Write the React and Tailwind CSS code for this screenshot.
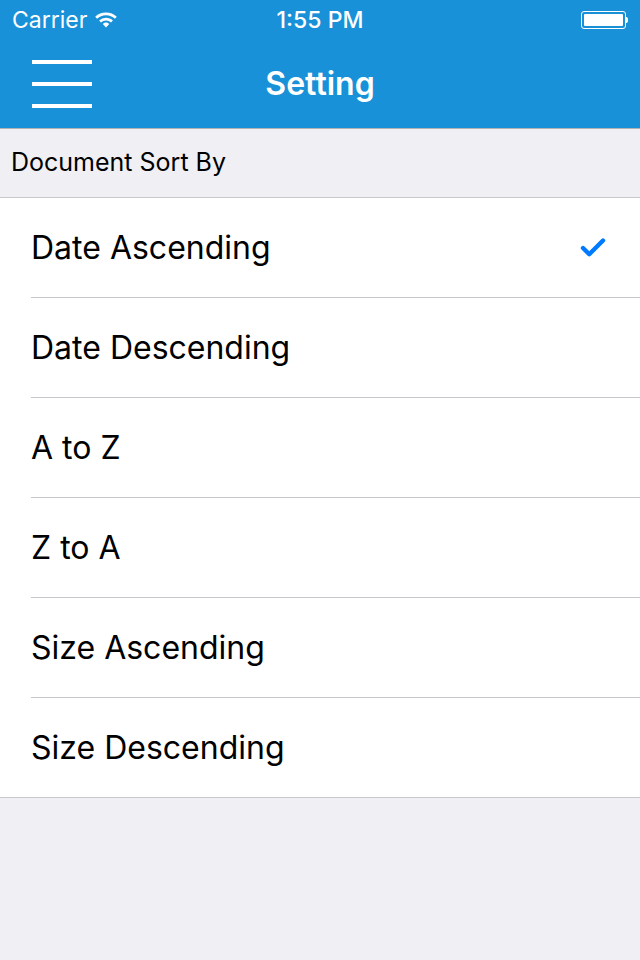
import { Check } from 'lucide-react';

const options = ['Date Ascending', 'Date Descending', 'A to Z', 'Z to A', 'Size Ascending', 'Size Descending'];

function Wifi() {
  return (
    <svg width="22" height="16" viewBox="0 0 22 16" fill="white">
      <path d="M11 15.5l3.2-3.6a4.6 4.6 0 0 0-6.4 0z" />
      <path d="M11 5.8c2.7 0 5.1 1 6.9 2.7l-1.9 2.1A7.3 7.3 0 0 0 11 8.6a7.3 7.3 0 0 0-5 2L4.1 8.5A10 10 0 0 1 11 5.8z" />
      <path d="M11 0.5c4.2 0 8 1.6 10.8 4.2l-1.9 2.1A12.8 12.8 0 0 0 11 3.3 12.8 12.8 0 0 0 2.1 6.8L0.2 4.7A15.6 15.6 0 0 1 11 0.5z" />
    </svg>
  );
}

export default function App() {
  const selected = 'Date Ascending';

  return (
    <div className="min-h-[960px] bg-[#efeff4]" style={{ fontFamily: 'Inter, "Liberation Sans", sans-serif' }}>
      <div className="bg-[#1891d8] text-white border-b border-[#b2b2b2]">
        <div className="h-10 flex items-center justify-between px-3 relative">
          <div className="flex items-center gap-2 text-[23px]">
            <span>Carrier</span>
            <Wifi />
          </div>
          <span className="absolute left-1/2 -translate-x-1/2 text-[23px] font-medium">1:55 PM</span>
          <div className="flex items-center">
            <div className="w-[45px] h-[18px] border border-white rounded-[3px] p-[2px]">
              <div className="w-full h-full bg-white rounded-[1px]" />
            </div>
            <div className="w-[2px] h-[6px] bg-white rounded-r-sm" />
          </div>
        </div>
        <div className="h-[88px] flex items-center relative">
          <div className="ml-8 flex flex-col gap-[18px] w-[60px]">
            <div className="h-[4px] bg-white" />
            <div className="h-[4px] bg-white" />
            <div className="h-[4px] bg-white" />
          </div>
          <span className="absolute left-1/2 -translate-x-1/2 text-[32px] font-semibold">Setting</span>
        </div>
      </div>

      <div className="h-[69px] flex items-center px-[11px] text-[25px] text-black border-b border-[#c8c7cc]">
        Document Sort By
      </div>

      <div className="bg-white border-b border-[#c8c7cc]">
        {options.map((o, i) => {
          const last = i === options.length - 1;
          return (
            <div key={o} className="pl-[31px]">
              <div className={`flex items-center justify-between pr-8 text-[32px] text-black ${last ? 'h-[99px]' : 'h-[100px] border-b border-[#c8c7cc]'}`}>
                <span>{o}</span>
                {o === selected && <Check size={30} strokeWidth={3.5} className="text-[#007aff]" />}
              </div>
            </div>
          );
        })}
      </div>
    </div>
  );
}
